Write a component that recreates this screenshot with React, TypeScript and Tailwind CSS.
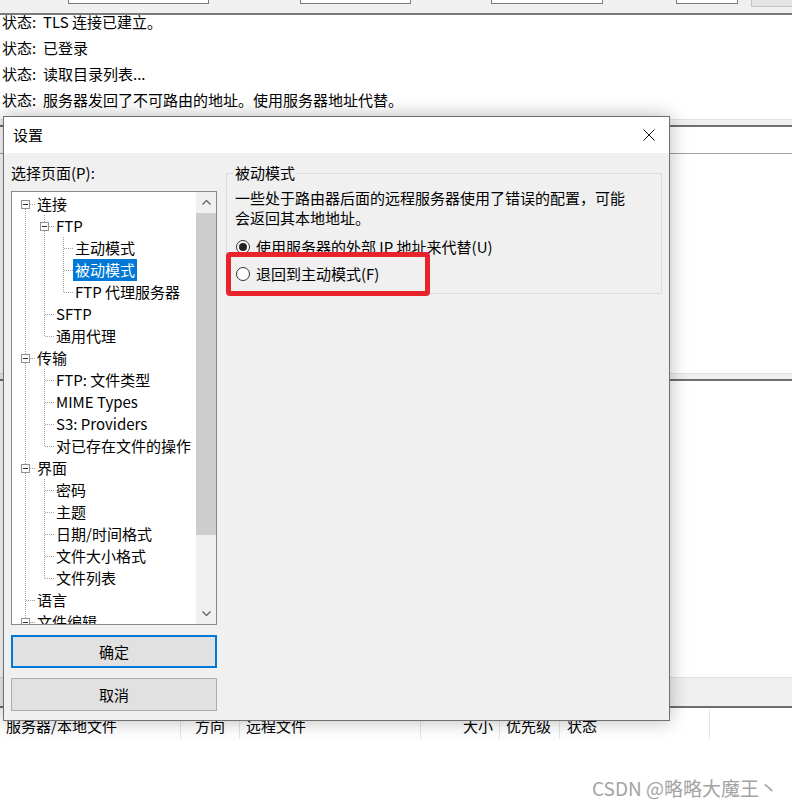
import React from "react";

type Row = {
  label: string;
  level: number;
  box?: boolean;
  top: boolean;
  bottom: boolean;
  selected?: boolean;
};

const rows: Row[] = [
  { label: "连接", level: 0, box: true, top: false, bottom: true },
  { label: "FTP", level: 1, box: true, top: true, bottom: true },
  { label: "主动模式", level: 2, top: true, bottom: true },
  { label: "被动模式", level: 2, top: true, bottom: true, selected: true },
  { label: "FTP 代理服务器", level: 2, top: true, bottom: false },
  { label: "SFTP", level: 1, top: true, bottom: true },
  { label: "通用代理", level: 1, top: true, bottom: false },
  { label: "传输", level: 0, box: true, top: true, bottom: true },
  { label: "FTP: 文件类型", level: 1, top: true, bottom: true },
  { label: "MIME Types", level: 1, top: true, bottom: true },
  { label: "S3: Providers", level: 1, top: true, bottom: true },
  { label: "对已存在文件的操作", level: 1, top: true, bottom: false },
  { label: "界面", level: 0, box: true, top: true, bottom: true },
  { label: "密码", level: 1, top: true, bottom: true },
  { label: "主题", level: 1, top: true, bottom: true },
  { label: "日期/时间格式", level: 1, top: true, bottom: true },
  { label: "文件大小格式", level: 1, top: true, bottom: true },
  { label: "文件列表", level: 1, top: true, bottom: false },
  { label: "语言", level: 0, top: true, bottom: true },
  { label: "文件编辑", level: 0, box: true, top: true, bottom: true },
];

const logLines = [
  "TLS 连接已建立。",
  "已登录",
  "读取目录列表...",
  "服务器发回了不可路由的地址。使用服务器地址代替。",
];

// one 19px column of the tree connector lines
const Cell = ({ top, bottom, across, box }: { top?: boolean; bottom?: boolean; across?: boolean; box?: boolean }) => (
  <svg width="19" height="22" className="block shrink-0">
    {top && <line x1="9.5" y1="0" x2="9.5" y2="11" stroke="#a0a0a0" strokeDasharray="1 1" />}
    {bottom && <line x1="9.5" y1="12" x2="9.5" y2="22" stroke="#a0a0a0" strokeDasharray="1 1" />}
    {across && <line x1="10" y1="11.5" x2="19" y2="11.5" stroke="#a0a0a0" strokeDasharray="1 1" />}
    {box && (
      <>
        <rect x="5.5" y="7.5" width="8" height="8" fill="white" stroke="#919191" />
        <line x1="7" y1="11.5" x2="12" y2="11.5" stroke="#2b2b2b" />
      </>
    )}
  </svg>
);

const TreeRow = ({ row }: { row: Row }) => (
  <div className="flex h-[22px] items-center whitespace-nowrap">
    {Array.from({ length: row.level }).map((_, i) => (
      <Cell key={i} top bottom />
    ))}
    <Cell top={row.top} bottom={row.bottom} across box={row.box} />
    <span
      className={
        row.selected
          ? "h-[22px] px-[2px] leading-[22px] bg-[#0078d7] text-white"
          : "h-[22px] px-[2px] leading-[22px] text-black"
      }
    >
      {row.label}
    </span>
  </div>
);

const Radio = ({ checked, label }: { checked?: boolean; label: string }) => (
  <div className="flex h-[27px] items-center">
    <div className="ml-[1px] flex h-[14px] w-[14px] items-center justify-center rounded-full border border-[#333333] bg-white">
      {checked && <div className="h-[8px] w-[8px] rounded-full bg-[#222222]" />}
    </div>
    <span className="ml-[6px] leading-[20px]">{label}</span>
  </div>
);

export default function App() {
  return (
    <div className="relative flex h-[807px] w-[792px] flex-col overflow-hidden bg-white font-['Noto_Sans_CJK_SC',sans-serif] text-[15px] text-black">
      {/* toolbar strip */}
      <div className="flex h-[15px] items-start border-b-2 border-[#7a7a7a] bg-[#f0f0f0]">
        <div className="ml-[68px] h-[4px] w-[141px] border-x border-b border-[#7a7a7a] bg-white" />
        <div className="ml-[91px] h-[4px] w-[111px] border-x border-b border-[#7a7a7a] bg-white" />
        <div className="ml-[80px] h-[4px] w-[112px] border-x border-b border-[#7a7a7a] bg-white" />
        <div className="ml-[73px] h-[4px] w-[62px] border-x border-b border-[#7a7a7a] bg-white" />
        <div className="ml-[13px] h-[7px] flex-1 border-b border-l border-[#c4c4c4] bg-[#e5e5e5]" />
      </div>

      {/* message log */}
      <div className="flex h-[104px] flex-col gap-[12px] px-[2px] leading-[14px]">
        {logLines.map((l) => (
          <div key={l} className="flex whitespace-nowrap">
            <span className="w-[41px] shrink-0">状态:</span>
            <span>{l}</span>
          </div>
        ))}
      </div>

      <div className="h-[8px] border-t border-b-2 border-t-[#e3e3e3] border-b-[#6e6e6e] bg-[#f0f0f0]" />
      <div className="h-[27px] border-b border-[#a0a0a0]" />
      <div className="h-[219px]" />
      <div className="h-[8px] border-t border-b-2 border-t-[#e0e0e0] border-b-[#6e6e6e] bg-[#f0f0f0]" />
      <div className="h-[296px]" />
      <div className="h-[31px] border-t border-b-2 border-t-[#e0e0e0] border-b-[#6e6e6e] bg-[#f0f0f0]" />

      {/* queue header */}
      <div className="flex h-[33px] items-stretch py-[2px] leading-[20px] whitespace-nowrap">
        <div className="flex w-[181px] items-center border-r border-[#e5e5e5] pt-[2px] pl-[6px]">服务器/本地文件</div>
        <div className="flex w-[59px] items-center justify-center border-r border-[#e5e5e5] pt-[2px]">方向</div>
        <div className="flex w-[181px] items-center border-r border-[#e5e5e5] pt-[2px] pl-[6px]">远程文件</div>
        <div className="flex w-[79px] items-center justify-end border-r border-[#e5e5e5] pt-[2px] pr-[6px]">大小</div>
        <div className="flex w-[60px] items-center border-r border-[#e5e5e5] pt-[2px] pl-[6px]">优先级</div>
        <div className="flex w-[150px] items-center border-r border-[#e5e5e5] pt-[2px] pl-[7px]">状态</div>
      </div>

      <div className="flex flex-1 items-end justify-end pr-[14px] pb-[7px]">
        <span className="text-[19px] leading-[24px] text-[#a3a3a3]">CSDN @略略大魔王丶</span>
      </div>

      {/* settings dialog */}
      <div className="absolute top-[116px] left-[3px] flex h-[605px] w-[667px] flex-col border border-[#707070] bg-[#f0f0f0] shadow-[0_0_18px_rgba(0,0,0,0.28)]">
        <div className="flex h-[36px] shrink-0 items-center justify-between bg-white pr-[14px] pl-[9px]">
          <span className="leading-[20px]">设置</span>
          <svg width="12" height="12" viewBox="0 0 12 12">
            <path d="M0.5 0.5 L11.5 11.5 M11.5 0.5 L0.5 11.5" stroke="#111" strokeWidth="1" />
          </svg>
        </div>

        <div className="flex flex-1 px-[7px]">
          {/* left column */}
          <div className="flex w-[206px] flex-col pt-[10px]">
            <div className="leading-[20px]">选择页面(P):</div>
            <div className="mt-[8px] flex h-[434px] border border-[#828790] bg-white">
              <div className="flex-1 overflow-hidden pt-[1px] pl-[4px]">
                {rows.map((r) => (
                  <TreeRow key={r.label} row={r} />
                ))}
              </div>
              <div className="flex w-[20px] flex-col bg-[#f0f0f0]">
                <div className="flex h-[21px] items-center justify-center">
                  <svg width="9" height="5" viewBox="0 0 9 5">
                    <polyline points="0.5,4.5 4.5,0.5 8.5,4.5" fill="none" stroke="#606060" strokeWidth="1.2" />
                  </svg>
                </div>
                <div className="h-[322px] bg-[#cdcdcd]" />
                <div className="flex-1" />
                <div className="flex h-[21px] items-center justify-center">
                  <svg width="9" height="5" viewBox="0 0 9 5">
                    <polyline points="0.5,0.5 4.5,4.5 8.5,0.5" fill="none" stroke="#606060" strokeWidth="1.2" />
                  </svg>
                </div>
              </div>
            </div>
            <div className="mt-[10px] flex h-[33px] items-center justify-center border-2 border-[#0078d7] bg-[#e1e1e1] leading-[20px]">
              确定
            </div>
            <div className="mt-[10px] flex h-[33px] items-center justify-center border border-[#adadad] bg-[#e1e1e1] leading-[20px]">
              取消
            </div>
          </div>

          {/* right column */}
          <div className="ml-[9px] flex-1 pt-[10px]">
            <fieldset className="border border-[#dcdcdc] pt-[5px] pr-[8px] pb-[6px] pl-[8px]">
              <legend className="-ml-[2px] px-[2px] leading-[20px]">被动模式</legend>
              <div className="leading-[20px] whitespace-nowrap">
                一些处于路由器后面的远程服务器使用了错误的配置，可能
                <br />
                会返回其本地地址。
              </div>
              <div className="mt-[5px]">
                <Radio checked label="使用服务器的外部 IP 地址来代替(U)" />
                <Radio label="退回到主动模式(F)" />
              </div>
            </fieldset>
          </div>
        </div>
      </div>

      {/* red annotation box */}
      <div className="absolute top-[252px] left-[226px] h-[44px] w-[204px] rounded-[4px] border-[5px] border-[#e8232b]" />
    </div>
  );
}
